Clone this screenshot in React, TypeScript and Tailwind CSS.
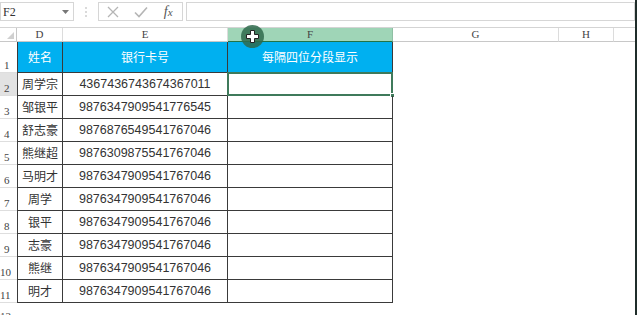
import React from "react";

const names = ["周学宗", "邹银平", "舒志豪", "熊继超", "马明才", "周学", "银平", "志豪", "熊继", "明才"];
const nums = [
  "4367436743674367011",
  "9876347909541776545",
  "9876876549541767046",
  "9876309875541767046",
  "9876347909541767046",
  "9876347909541767046",
  "9876347909541767046",
  "9876347909541767046",
  "9876347909541767046",
  "9876347909541767046",
];

const serif = { fontFamily: '"Liberation Serif", "Noto Sans CJK SC", serif' };
const cjk = { fontFamily: '"Noto Sans CJK SC", "Liberation Sans", sans-serif' };
const num = { fontFamily: '"Liberation Sans", Arial, sans-serif' };

export default function App() {
  return (
    <div className="w-[639px] h-[315px] bg-white overflow-hidden flex">
      <div className="w-[635px] h-full flex flex-col">
        {/* formula bar */}
        <div className="h-[27px] flex items-start pt-[2px] shrink-0">
          <div className="w-[74px] h-[19px] border border-[#d6d6d6] flex items-center justify-between pl-[2px] pr-[4px] text-[12px] text-[#333]" style={serif}>
            <span>F2</span>
            <svg width="7" height="4" viewBox="0 0 7 4"><path d="M0 0h7L3.5 4z" fill="#777" /></svg>
          </div>
          <div className="w-[24px] h-[19px] flex items-center justify-center">
            <svg width="2" height="10" viewBox="0 0 2 10"><circle cx="1" cy="1" r="0.8" fill="#aaa" /><circle cx="1" cy="5" r="0.8" fill="#aaa" /><circle cx="1" cy="9" r="0.8" fill="#aaa" /></svg>
          </div>
          <div className="w-[85px] h-[19px] border border-[#d6d6d6] flex items-center">
            <div className="w-[28px] flex justify-center">
              <svg width="12" height="12" viewBox="0 0 12 12"><path d="M1 1l10 10M11 1L1 11" stroke="#b5b5b5" strokeWidth="1.3" /></svg>
            </div>
            <div className="w-[28px] flex justify-center">
              <svg width="14" height="12" viewBox="0 0 14 12"><path d="M1 6.5l4 4L13 1.5" stroke="#b5b5b5" strokeWidth="1.6" fill="none" /></svg>
            </div>
            <div className="w-[28px] flex justify-center text-[14px] italic text-[#555] leading-none" style={serif}>
              <span>f<span className="text-[11px]">x</span></span>
            </div>
          </div>
          <div className="ml-[3px] flex-1 h-[19px] border border-[#d6d6d6]" />
        </div>

        {/* sheet */}
        <div className="relative flex-1 grid grid-cols-[17px_46px_165px_165px_166px_55px_1fr] grid-rows-[14px_31px_repeat(10,23px)_1fr] border-t border-[#d4d4d4]">
          {/* column headers */}
          <div className="border-b border-r border-[#c8c8c8] relative">
            <svg className="absolute right-[2px] bottom-[2px]" width="7" height="7" viewBox="0 0 7 7"><path d="M7 0v7H0z" fill="#d0d0d0" /></svg>
          </div>
          {["D", "E", "F", "G", "H", ""].map((c) => (
            <div
              key={c || "x"}
              className={`flex items-center justify-center text-[11px] text-[#444] border-b border-r ${c === "F" ? "bg-[#9fd5b7] border-[#8fbfa3] border-b-[#217346]" : "border-[#dcdcdc] border-b-[#c8c8c8]"} ${c === "" ? "border-r-0" : ""}`}
              style={serif}
            >
              {c}
            </div>
          ))}

          {/* row 1 */}
          <div className="border-b border-[#dedede] flex items-end pl-[4px] text-[11px] text-[#444] leading-[14px]" style={serif}>1</div>
          <div className="bg-[#00b0f0] border-l border-r border-b border-[#3a3a3a] flex items-center justify-center text-white text-[12px]" style={cjk}>姓名</div>
          <div className="bg-[#00b0f0] border-r border-b border-[#3a3a3a] flex items-center justify-center text-white text-[12px]" style={cjk}>银行卡号</div>
          <div className="bg-[#00b0f0] border-r border-b border-[#3a3a3a] flex items-center justify-center text-white text-[12px]" style={cjk}>每隔四位分段显示</div>
          <div />
          <div />
          <div />

          {names.map((n, i) => (
            <React.Fragment key={i}>
              <div
                className={`border-b border-[#dedede] flex items-end pl-[${i + 2 >= 10 ? 0 : 4}px] text-[11px] text-[#444] leading-[14px] ${i === 0 ? "bg-[#e2e2e2]" : ""} ${i + 2 >= 10 ? "pl-[0px]" : "pl-[4px]"}`}
                style={serif}
              >
                {i + 2}
              </div>
              <div className="border-l border-r border-b border-[#3a3a3a] flex items-center justify-center text-[12px] text-[#333]" style={cjk}>{n}</div>
              <div className="border-r border-b border-[#3a3a3a] flex items-center justify-center text-[12.5px] text-[#333]" style={num}>{nums[i]}</div>
              <div className="border-r border-b border-[#3a3a3a] relative">
                {i === 0 && (
                  <>
                    <div className="absolute -left-[1px] -top-[1px] -right-[1px] bottom-[-1px] border-2 border-[#3f7a5b]" />
                    <div className="absolute -right-[3px] -bottom-[3px] w-[5px] h-[5px] bg-[#3f7a5b] border border-white" />
                  </>
                )}
              </div>
              <div />
              <div />
              <div />
            </React.Fragment>
          ))}

          {/* row 12 */}
          <div className="flex items-end pl-[0px] text-[11px] text-[#444] leading-[14px] pt-[6px]" style={serif}>12</div>
          <div />
          <div />
          <div />
          <div />
          <div />
          <div />

          {/* cursor overlay */}
          <div className="absolute left-[241px] top-[-3px] w-[23px] h-[23px] rounded-full bg-[#2f6a4c]/85 flex items-center justify-center">
            <svg width="13" height="13" viewBox="0 0 13 13">
              <path d="M4.5 0.5h4v4h4v4h-4v4h-4v-4h-4v-4h4z" fill="#fff" stroke="#222" strokeWidth="1" />
            </svg>
          </div>
        </div>
      </div>
      <div className="w-[2px] h-full bg-[#1f2d2a]" />
      <div className="flex-1 bg-white" />
    </div>
  );
}
